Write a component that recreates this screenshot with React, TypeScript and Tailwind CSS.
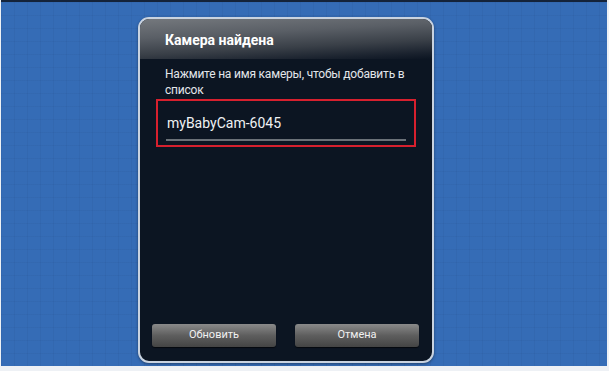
export default function App() {
  return (
    <div className="w-[609px] h-[371px] bg-[#eef1f5] overflow-hidden font-['Roboto',sans-serif]">
      <div className="ml-px w-[606px] h-[366px] border-t-2 border-[#14233a] bg-[#356cb6] bg-[linear-gradient(rgba(20,40,90,0.06)_1px,transparent_1px),linear-gradient(90deg,rgba(20,40,90,0.06)_1px,transparent_1px)] bg-[size:13px_13px] pl-[137px] pt-[15px]">
        {/* Dialog */}
        <div className="w-[296px] h-[346px] rounded-[11px] border-2 border-[#c9d3e0] bg-[#0c1522] overflow-hidden flex flex-col shadow-[0_1px_3px_rgba(0,0,0,0.4)]">
          <div className="h-[40px] shrink-0 bg-[linear-gradient(177deg,#74787d_0%,#5a5f66_35%,#3a4048_65%,#1a222e_88%,#0c1522_100%)] pl-[25px] pt-[12px]">
            <h1 className="text-white font-bold text-[14px] leading-[18px]">Камера найдена</h1>
          </div>

          <p className="pl-[25px] pr-2 pt-[7px] text-[#e3e6ea] text-[12px] tracking-[-0.2px] leading-[16px]">
            Нажмите на имя камеры, чтобы добавить в список
          </p>

          <div className="mx-[16px] mt-px h-[48px] border-2 border-[#d7202e] px-[8px] pt-[14px]">
            <div className="pl-px text-[#f0f2f4] text-[14px] leading-[16px]">myBabyCam-6045</div>
            <div className="mt-[8px] h-[2px] bg-[#6b7178]" />
          </div>

          <div className="flex-1" />

          <div className="flex gap-[19px] px-[12px] pb-[14px]">
            <button className="w-[124px] h-[23px] rounded-[3px] bg-[linear-gradient(#8a8a8a,#5e5e5e_50%,#444_100%)] text-[#f1f1f1] text-[11px] shadow-[0_1px_1px_rgba(0,0,0,0.6)]">
              Обновить
            </button>
            <button className="w-[124px] h-[23px] rounded-[3px] bg-[linear-gradient(#8a8a8a,#5e5e5e_50%,#444_100%)] text-[#f1f1f1] text-[11px] shadow-[0_1px_1px_rgba(0,0,0,0.6)]">
              Отмена
            </button>
          </div>
        </div>
      </div>
    </div>
  );
}
